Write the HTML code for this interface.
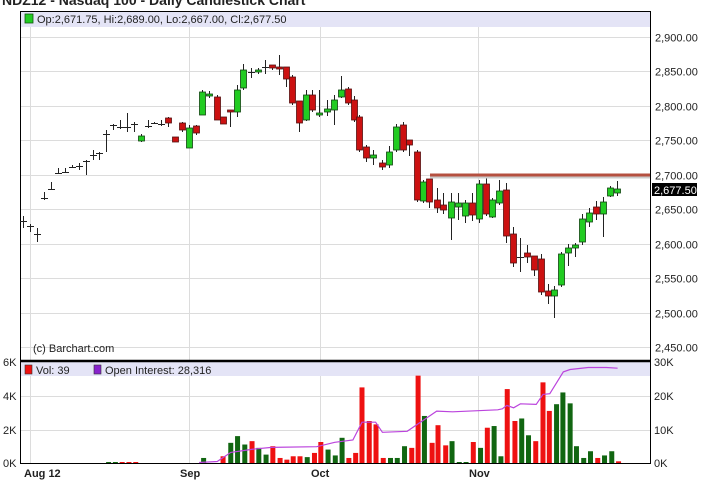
<!DOCTYPE html>
<html><head><meta charset="utf-8"><style>
html,body{margin:0;padding:0;background:#fff;width:708px;height:485px;overflow:hidden}
svg{display:block;font-family:"Liberation Sans",sans-serif}
</style></head><body>
<svg id="s" width="708" height="485" viewBox="0 0 708 485" xmlns="http://www.w3.org/2000/svg">
<text x="2" y="5" font-size="14" font-weight="bold" fill="#222">NDZ12 - Nasdaq 100 - Daily Candlestick Chart</text>
<rect x="20.5" y="11.5" width="630" height="452" fill="#fff" stroke="#000"/>
<g id="grid" stroke="#dcdcdc" stroke-width="1"></g>
<rect x="21" y="12" width="629" height="15" fill="#e4e4f6"/>
<rect x="25" y="14" width="8" height="9" fill="#22cc22" stroke="#115511" stroke-width="0.8"/>
<text x="37" y="23" font-size="11" fill="#222">Op:2,671.75, Hi:2,689.00, Lo:2,667.00, Cl:2,677.50</text>
<text x="33" y="352" font-size="11" fill="#222">(c) Barchart.com</text>
<g id="c"></g>
<line x1="430" y1="177" x2="650" y2="177" stroke="#ccc" stroke-width="3"/>
<line x1="430" y1="175" x2="650" y2="175" stroke="#b55040" stroke-width="3"/>
<rect x="21" y="362" width="629" height="14" fill="#e4e4f6"/>
<line x1="20" y1="361" x2="651" y2="361" stroke="#000" stroke-width="2.5"/>
<rect x="25" y="365" width="7" height="9" fill="#ee1111" stroke="#333" stroke-width="0.6"/>
<text x="36" y="374" font-size="11" fill="#222">Vol: 39</text>
<rect x="94" y="365" width="7" height="9" fill="#8822cc" stroke="#333" stroke-width="0.6"/>
<text x="105" y="374" font-size="11" fill="#222">Open Interest: 28,316</text>
<g id="v"></g>
<polyline id="oi" fill="none" stroke="#bb44dd" stroke-width="1.2"/>
<g id="ax" font-size="11" fill="#222"></g>
<rect x="652" y="183" width="45" height="13" fill="#000"/>
<text x="654" y="194" font-size="11" fill="#fff">2,677.50</text>
<g font-size="11" font-weight="bold" fill="#222">
<text x="24" y="477">Aug 12</text><text x="180" y="477">Sep</text><text x="311" y="477">Oct</text><text x="469" y="477">Nov</text>
</g>
</svg>
<script>
var NS="http://www.w3.org/2000/svg";
function el(p,t,a){var e=document.createElementNS(NS,t);for(var k in a)e.setAttribute(k,a[k]);document.getElementById(p).appendChild(e);return e;}
function yp(p){return 37+(2900-p)*0.6889;}
var prices=[2900,2850,2800,2750,2700,2650,2600,2550,2500,2450];
prices.forEach(function(p){var y=Math.round(yp(p))+0.5;el("grid","line",{x1:21,x2:650,y1:y,y2:y});
var t=el("ax","text",{x:655,y:y+4});t.textContent=p.toLocaleString("en-US",{minimumFractionDigits:2});});
[30.5,189.5,320.5,478.5].forEach(function(x){el("grid","line",{x1:x,x2:x,y1:27,y2:463});});
[[6,362],[4,396],[2,430],[0,463]].forEach(function(a){var y=a[1]+0.5;if(a[0]>0&&a[0]<6)el("grid","line",{x1:21,x2:650,y1:y,y2:y});
var t=el("ax","text",{x:3,y:a[1]+4});t.textContent=a[0]+"K";});
[[30,362],[20,396],[10,430],[0,463]].forEach(function(a){var t=el("ax","text",{x:654,y:a[1]+4});t.textContent=a[0]+"K";});
// candles: x, top, bottom, hi, lo, type (g,r,x)
var C=[[23,221,223,216,228,"x"],[30,226,227,224,232,"x"],[37,234,235,228,242,"x"],[44,198,199,192,200,"x"],[51,189,190,182,190,"x"],[58,173,174,168,174,"x"],[65,172,173,168,173,"x"],[72,167,168,165,168,"x"],[79,166,167,163,170,"x"],[86,161,162,160,175,"x"],[93,155,156,150,160,"x"],[99,153,154,152,160,"x"],[106,134,135,130,152,"x"],[113,125,126,124,130,"x"],[120,127,128,120,129,"x"],[127,127,128,113,132,"x"],[134,124,125,122,132,"x"],[141,136,141,134,142,"g"],[148,126,127,120,128,"x"],[154,123,124,122,124,"x"],[161,124,125,120,126,"x"],[168,118,123,117,127,"r"],[175,137,142,137,142,"r"],[182,123,130,122,132,"r"],[189,128,148,125,148,"g"],[196,126,133,125,135,"r"],[202,92,115,90,115,"g"],[209,94,96,91,98,"g"],[217,97,120,95,120,"r"],[223,117,124,117,124,"r"],[230,110,112,110,127,"r"],[237,90,112,85,117,"g"],[243,70,88,64,90,"g"],[251,72,73,68,78,"x"],[258,70,72,68,74,"g"],[265,67,68,60,74,"x"],[272,65,68,65,70,"r"],[279,67,69,55,75,"r"],[286,67,79,67,87,"r"],[292,77,103,75,105,"r"],[299,101,123,101,132,"r"],[306,95,120,90,121,"g"],[312,95,110,90,112,"r"],[319,113,115,90,117,"g"],[327,109,112,100,116,"g"],[334,100,110,95,125,"g"],[341,90,97,76,98,"g"],[348,89,103,87,105,"r"],[354,100,120,96,122,"r"],[359,117,150,115,152,"r"],[366,147,158,145,162,"r"],[373,155,158,150,165,"g"],[382,163,167,160,170,"r"],[389,152,165,146,168,"g"],[396,127,150,124,152,"g"],[403,125,150,122,152,"r"],[409,140,145,140,156,"r"],[417,152,200,150,202,"r"],[423,182,201,180,203,"g"],[429,179,202,179,208,"r"],[437,200,208,188,213,"r"],[443,205,210,193,214,"r"],[451,202,218,193,240,"g"],[458,203,207,193,220,"g"],[465,203,216,200,223,"g"],[472,203,215,193,221,"r"],[479,184,219,180,223,"g"],[486,184,214,178,216,"r"],[492,200,217,198,218,"g"],[499,191,203,180,205,"g"],[506,190,236,183,243,"r"],[513,234,263,227,267,"r"],[520,257,258,238,272,"x"],[527,253,257,245,263,"r"],[534,256,270,256,276,"r"],[541,259,292,254,295,"r"],[548,291,296,284,304,"r"],[554,290,296,286,318,"g"],[561,254,285,252,287,"g"],[568,248,253,244,266,"g"],[575,245,248,243,257,"g"],[582,219,242,214,245,"g"],[589,213,222,208,227,"g"],[596,207,214,201,220,"r"],[603,202,214,197,237,"g"],[610,188,196,186,197,"g"],[617,189,193,181,196,"g"]];
C.forEach(function(c){var x=c[0];
el("c","line",{x1:x+0.5,x2:x+0.5,y1:c[3],y2:c[4],stroke:"#222","stroke-width":1});
if(c[5]=="x"){el("c","line",{x1:x-3,x2:x+4,y1:c[1]+0.5,y2:c[1]+0.5,stroke:"#222"});}
else el("c","rect",{x:x-2.5,y:c[1],width:6,height:Math.max(2,c[2]-c[1]),fill:c[5]=="g"?"#22cc22":"#cc1111",stroke:c[5]=="g"?"#114411":"#551111","stroke-width":0.8});});
var V=[[240,"g",.05],[255,"g",.05],[270,"r",.05],[285,"r",.05],[300,"r",.05],[450,"g",.3],[493,"r",.4],[510,"g",1.2],[525,"g",1.6],[541,"g",1.1],[557,"r",1.3],[572,"g",.9],[588,"g",.5],[603,"r",1],[619,"r",.3],[634,"r",.2],[648,"r",.4],[663,"r",.4],[679,"g",.35],[695,"r",.6],[709,"r",1.25],[725,"g",.8],[741,"g",.45],[756,"g",1.5],[771,"r",.3],[786,"r",.6],[800,"r",4.5],[816,"r",2.5],[831,"r",2.3],[847,"r",.3],[863,"g",.3],[878,"g",.3],[894,"g",1],[910,"r",.9],[924,"r",5.2],[938,"g",2.8],[955,"r",1.2],[968,"r",2.25],[985,"r",1.05],[999,"g",1.3],[1015,"g",.05],[1030,"g",.05],[1046,"r",1.25],[1062,"g",.9],[1077,"r",2.1],[1092,"g",2.2],[1107,"g",.4],[1121,"r",4.4],[1138,"r",2.5],[1153,"g",2.65],[1168,"g",1.65],[1184,"r",1.3],[1200,"r",4.8],[1214,"r",3.1],[1230,"g",3.5],[1244,"g",4.2],[1260,"g",3.55],[1274,"g",1],[1290,"g",.3],[1305,"g",.7],[1321,"r",.3],[1336,"g",.45],[1352,"g",.7],[1367,"r",.1]];
V.forEach(function(v){var x=v[0]/2.21,h=Math.max(1,v[2]*16.8);
el("v","rect",{x:x-2.5,y:463-h,width:5,height:h,fill:v[1]=="g"?"#116611":"#ee1111"});});
var O=[[440,365],[480,362],[510,335],[560,325],[600,320],[700,318],[740,305],[780,298],[800,245],[830,245],[845,275],[900,272],[915,258],[965,212],[1000,214],[1100,208],[1110,205],[1120,195],[1135,202],[1150,190],[1185,192],[1200,162],[1215,160],[1245,95],[1260,88],[1300,82],[1340,82],[1365,84]];
document.getElementById("oi").setAttribute("points",O.map(function(p){return (p[0]/2.21).toFixed(1)+","+(340+p[1]/2.98).toFixed(1);}).join(" "));
</script>
</body></html>
